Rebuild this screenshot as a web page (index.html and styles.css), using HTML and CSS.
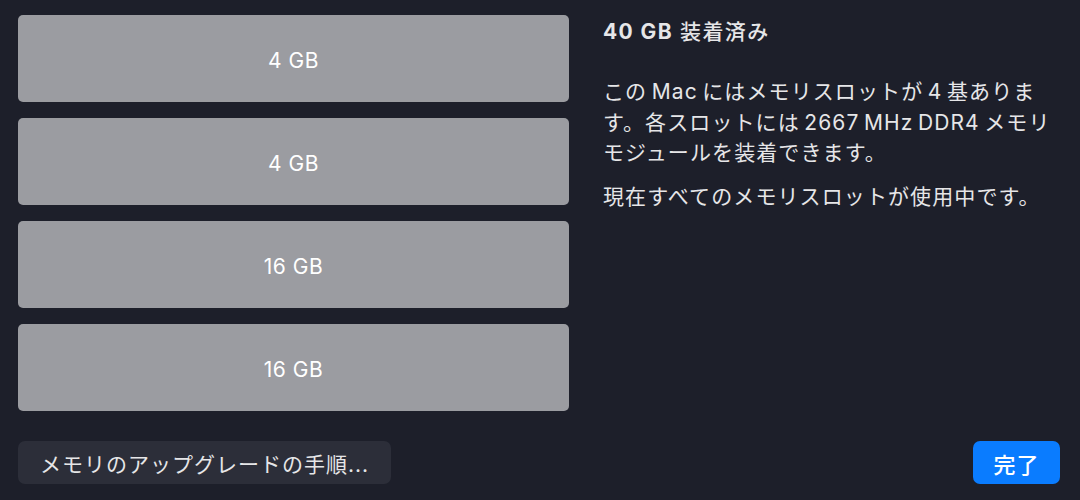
FILE: index.html
```html
<!DOCTYPE html>
<html lang="ja">
<head>
  <meta charset="UTF-8">
  <title>メモリ</title>
  <link rel="stylesheet" href="styles.css">
</head>
<body>
  <div class="memory-sheet">
    <div class="memory-main">
      <!-- スロット一覧 -->
      <div class="slot-list">
        <div class="slot">4 GB</div>
        <div class="slot">4 GB</div>
        <div class="slot">16 GB</div>
        <div class="slot">16 GB</div>
      </div>

      <!-- 説明 -->
      <div class="memory-info">
        <div class="memory-total"><b>40 GB</b> 装着済み</div>
        <p>この Mac にはメモリスロットが 4 基あります。各スロットには 2667 MHz DDR4 メモリモジュールを装着できます。</p>
        <p>現在すべてのメモリスロットが使用中です。</p>
      </div>
    </div>

    <div class="memory-footer">
      <button class="btn">メモリのアップグレードの手順...</button>
      <button class="btn btn-primary">完了</button>
    </div>
  </div>
</body>
</html>
```

FILE: styles.css
```css
/* メモリ シート */
html, body {
  margin: 0;
  height: 100%;
  background-color: #1d1f2a;
}

body {
  font-family: Inter, "Noto Sans CJK JP", sans-serif;
  color: #e6e6e8;
}

.memory-sheet {
  height: 100%;
  box-sizing: border-box;
  padding: 15px 20px 16px 18px;
  display: flex;
  flex-direction: column;
}

.memory-main {
  display: flex;
  gap: 34px;
}

.slot-list {
  width: 551px;
  flex-shrink: 0;
  display: flex;
  flex-direction: column;
  gap: 16px;
}

.slot {
  height: 87px;
  padding-top: 3px;
  box-sizing: border-box;
  border-radius: 5px;
  background-color: #9b9ca1;
  color: #fff;
  font-size: 21px;
  letter-spacing: 0.5px;
  display: flex;
  align-items: center;
  justify-content: center;
}

.memory-info {
  flex: 1;
  padding-top: 5px;
}

.memory-total {
  font-size: 21px;
  line-height: 24px;
  font-weight: 500;
  letter-spacing: 1.4px;
}

.memory-total b {
  font-weight: 700;
}

.memory-info p {
  margin: 0;
  font-size: 21px;
  letter-spacing: 1.1px;
  word-spacing: -2.5px;
  line-height: 30.5px;
}

.memory-info p:first-of-type {
  margin-top: 33px;
}

.memory-info p + p {
  margin-top: 13px;
}

.memory-footer {
  margin-top: auto;
  display: flex;
  justify-content: space-between;
  align-items: center;
}

.btn {
  height: 43px;
  padding: 0 22px;
  border: none;
  border-radius: 7px;
  background-color: #2c2e39;
  color: #e6e6e8;
  font-family: inherit;
  font-size: 21px;
  letter-spacing: 1px;
}

.btn-primary {
  width: 87px;
  padding: 0;
  background-color: #0a7cff;
  color: #fff;
  font-size: 22px;
  font-weight: 500;
}
```
